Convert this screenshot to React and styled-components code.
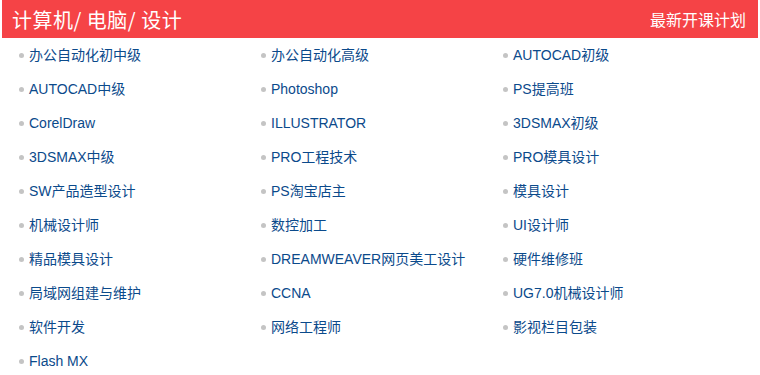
import React from "react";
import styled, { createGlobalStyle } from "styled-components";

const Global = createGlobalStyle`
  html, body { margin: 0; padding: 0; background: #fff; }
  body { font-family: "Liberation Sans", "Noto Sans CJK SC", sans-serif; }
`;

const Wrap = styled.div`
  width: 756px;
  margin: 0 2px;
`;

const Header = styled.div`
  height: 38px;
  background: #f54346;
  display: flex;
  align-items: center;
  justify-content: space-between;
  padding: 0 12px 0 10px;
  color: #fff;
`;

const Title = styled.h2`
  margin: 0;
  font-weight: normal;
  font-size: 20px;
  font-family: "Noto Sans CJK SC", sans-serif;
  letter-spacing: 0.5px;
`;

const More = styled.a`
  font-size: 16px;
  font-family: "Noto Sans CJK SC", sans-serif;
  color: #fff;
  text-decoration: none;
`;

const List = styled.ul`
  list-style: none;
  margin: 0;
  padding: 0 0 0 17px;
  display: grid;
  grid-template-columns: repeat(3, 242px);
  grid-auto-rows: 34px;
`;

const Item = styled.li`
  display: flex;
  align-items: center;
  gap: 5px;
  font-size: 14px;
  line-height: 16px;
  color: #0b4a8b;
  white-space: nowrap;
  &::before {
    content: "";
    width: 5px;
    height: 5px;
    border-radius: 50%;
    background: #c4c4c4;
    flex: none;
  }
`;

const items = [
  "办公自动化初中级", "办公自动化高级", "AUTOCAD初级",
  "AUTOCAD中级", "Photoshop", "PS提高班",
  "CorelDraw", "ILLUSTRATOR", "3DSMAX初级",
  "3DSMAX中级", "PRO工程技术", "PRO模具设计",
  "SW产品造型设计", "PS淘宝店主", "模具设计",
  "机械设计师", "数控加工", "UI设计师",
  "精品模具设计", "DREAMWEAVER网页美工设计", "硬件维修班",
  "局域网组建与维护", "CCNA", "UG7.0机械设计师",
  "软件开发", "网络工程师", "影视栏目包装",
  "Flash MX",
];

export default function App() {
  return (
    <>
      <Global />
      <Wrap>
        <Header>
          <Title>计算机/ 电脑/ 设计</Title>
          <More href="#">最新开课计划</More>
        </Header>
        <List>
          {items.map((t) => (
            <Item key={t}>{t}</Item>
          ))}
        </List>
      </Wrap>
    </>
  );
}
